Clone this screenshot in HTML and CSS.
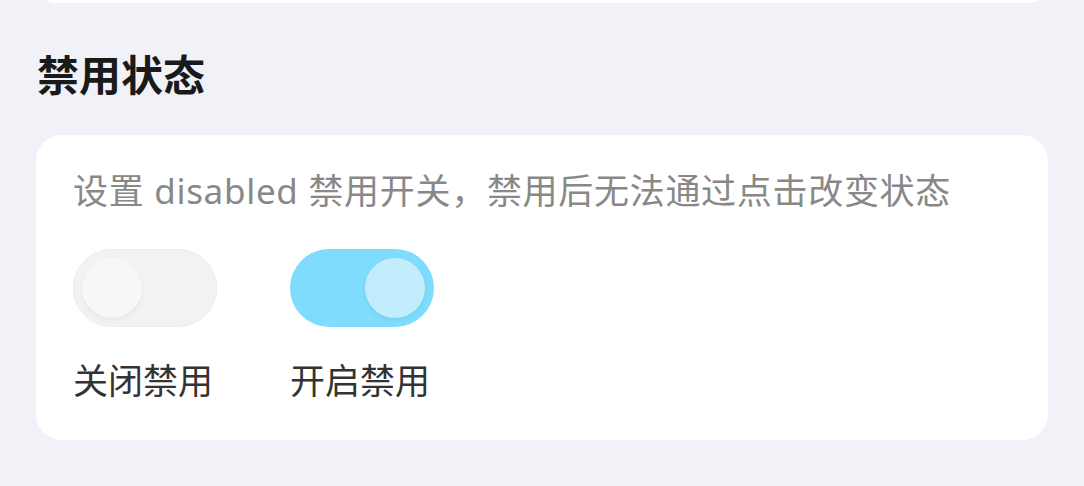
FILE: index.html
```html
<!DOCTYPE html>
<html lang="zh-CN">
<head>
  <meta charset="UTF-8">
  <title>Switch 禁用状态</title>
  <link rel="stylesheet" href="styles.css">
</head>
<body>

<div class="card prev-card"></div>

<h2 class="title">禁用状态</h2>

<div class="card demo">
  <p class="desc">设置 disabled 禁用开关，禁用后无法通过点击改变状态</p>
  <div class="row">
    <div class="item">
      <div class="switch disabled"><span class="knob"></span></div>
      <span class="label">关闭禁用</span>
    </div>
    <div class="item">
      <div class="switch on disabled"><span class="knob"></span></div>
      <span class="label">开启禁用</span>
    </div>
  </div>
</div>

</body>
</html>
```

FILE: styles.css
```css
body {
  margin: 0;
  background: #f1f2f7;
  font-family: "Noto Sans", "Noto Sans CJK SC", sans-serif;
  overflow: hidden;
}
.card {
  background: #fff;
  border-radius: 26px;
  margin: 0 36px;
}
.prev-card {
  height: 40px;
  margin-top: -37px;
}
.title {
  margin: 43px 0 31px;
  padding-left: 37px;
  font-size: 42px;
  line-height: 58px;
  font-weight: bold;
  color: #1a1a1a;
}
.demo {
  padding: 32px 37px 35px;
}
.desc {
  margin: 0;
  font-size: 35px;
  line-height: 48px;
  letter-spacing: 0.7px;
  color: #888;
}
.row {
  display: flex;
  gap: 73px;
  margin-top: 34px;
}
.item {
  display: flex;
  flex-direction: column;
}
.switch {
  width: 144px;
  height: 78px;
  box-sizing: border-box;
  padding: 9px;
  border-radius: 39px;
  background: #f2f2f2;
  box-shadow: inset 0 0 0 1px #ededed;
  display: flex;
}
.switch .knob {
  width: 60px;
  height: 60px;
  border-radius: 50%;
  background: #f7f7f7;
  box-shadow: 0 2px 4px rgba(0,0,0,0.06);
}
.switch.on {
  background: #7fdcfc;
  box-shadow: none;
  justify-content: flex-end;
}
.switch.on .knob {
  background: #c1edfd;
  box-shadow: 0 2px 4px rgba(0,80,120,0.08);
}
.label {
  margin-top: 30px;
  font-size: 35px;
  line-height: 48px;
  color: #333;
}
```
